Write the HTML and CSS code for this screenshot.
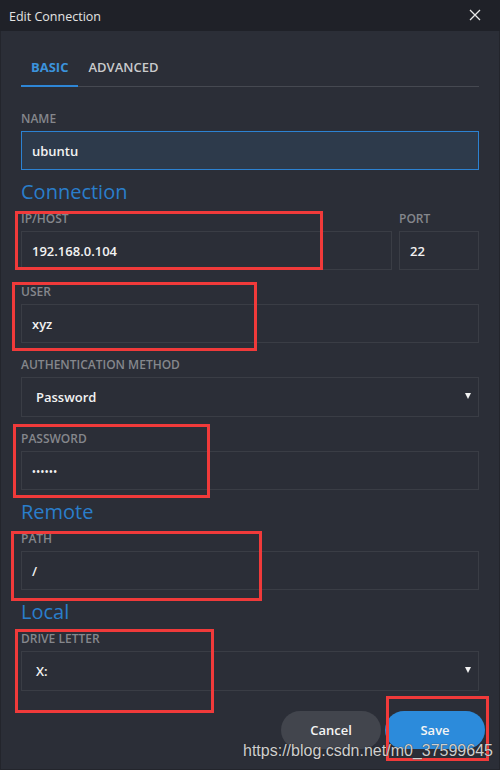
FILE: index.html
```html
<!DOCTYPE html>
<html>
<head>
<meta charset="utf-8">
<title>Edit Connection</title>
<link rel="stylesheet" href="styles.css">
</head>
<body>
<div class="window">
  <div class="titlebar">
    <span class="title">Edit Connection</span>
    <svg class="close" width="12" height="12" viewBox="0 0 12 12"><path d="M1 1L11 11M11 1L1 11" stroke="#e8e8e8" stroke-width="1.3" fill="none"/></svg>
  </div>
  <div class="content">
    <div class="tabs">
      <div class="tab active">BASIC</div>
      <div class="tab">ADVANCED</div>
    </div>

    <div class="field first">
      <div class="label">NAME</div>
      <div class="input focused">ubuntu</div>
    </div>

    <div class="heading h-connection">Connection</div>

    <div class="row after-heading">
      <div class="field grow">
        <div class="label">IP/HOST</div>
        <div class="input">192.168.0.104</div>
      </div>
      <div class="field port">
        <div class="label">PORT</div>
        <div class="input">22</div>
      </div>
    </div>

    <div class="field">
      <div class="label">USER</div>
      <div class="input">xyz</div>
    </div>

    <div class="field">
      <div class="label">AUTHENTICATION METHOD</div>
      <div class="select"><span>Password</span><span class="arrow"></span></div>
    </div>

    <div class="field">
      <div class="label">PASSWORD</div>
      <div class="input dots">&#8226;&#8226;&#8226;&#8226;&#8226;&#8226;</div>
    </div>

    <div class="heading h-section">Remote</div>

    <div class="field after-heading">
      <div class="label">PATH</div>
      <div class="input">/</div>
    </div>

    <div class="heading h-section">Local</div>

    <div class="field after-heading">
      <div class="label">DRIVE LETTER</div>
      <div class="select"><span>X:</span><span class="arrow"></span></div>
    </div>

    <div class="buttons">
      <div class="btn cancel">Cancel</div>
      <div class="btn save">Save</div>
    </div>
  </div>

  <div class="mark m-ip"></div>
  <div class="mark m-user"></div>
  <div class="mark m-pass"></div>
  <div class="mark m-path"></div>
  <div class="mark m-drive"></div>
  <div class="mark m-save"></div>
  <div class="watermark">https://blog.csdn.net/m0_37599645</div>
</div>
</body>
</html>
```
FILE: styles.css
```css
* { box-sizing: border-box; }
html, body { margin: 0; padding: 0; background: #2b2e37; }
body { font-family: "Open Sans", "Noto Sans", sans-serif; }

.window {
  position: relative;
  width: 500px;
  height: 770px;
  display: flex;
  flex-direction: column;
  overflow: hidden;
}

.titlebar {
  height: 31px;
  flex: none;
  background: #1f2128;
  display: flex;
  align-items: center;
  justify-content: space-between;
  padding: 0 19px 0 9px;
}
.title {
  color: #e4e4e4;
  font-size: 12.5px;
  line-height: 16px;
  margin-top: 2px;
}
.close { display: block; margin-top: -2px; }

.content {
  flex: 1;
  background: #2b2e37;
  border: 1px solid #23252c;
  border-top: none;
  padding: 17px 20px 0;
  display: flex;
  flex-direction: column;
}

.tabs {
  display: flex;
  border-bottom: 1px solid #464951;
}
.tab {
  font-size: 13px;
  line-height: 18px;
  font-weight: 600;
  color: #c9cacc;
  padding: 10px 10px 9px;
  border-bottom: 2px solid transparent;
  margin-bottom: -1px;
}
.tab.active {
  color: #3b93dc;
  font-weight: 700;
  border-bottom-color: #2e86d6;
}

.field { margin-top: 13px; display: flex; flex-direction: column; }
.field.first { margin-top: 23px; }
.after-heading { margin-top: 6px; }
.row { display: flex; gap: 7px; }
.row .field { margin-top: 0; }
.grow { flex: 1; }
.port { width: 80px; }

.label {
  font-size: 12px;
  line-height: 17px;
  font-weight: 600;
  color: #85878c;
  margin-bottom: 4px;
}

.input, .select {
  height: 39px;
  border: 1px solid #3a3d45;
  background: #2b2e37;
  color: #f2f2f2;
  font-size: 13px;
  font-weight: 600;
  display: flex;
  align-items: center;
  padding: 0 10px;
}
.input.focused {
  background: #2d3a4b;
  border-color: #2c82d2;
}
.input.dots { font-size: 10px; letter-spacing: 0.5px; padding-top: 1px; }
.select {
  height: 40px;
  padding: 0 7px 0 14px;
  justify-content: space-between;
}
.arrow {
  width: 0; height: 0;
  border-left: 3.5px solid transparent;
  border-right: 3.5px solid transparent;
  border-top: 6px solid #f2f2f2;
  margin-top: -2px;
}

.heading {
  font-size: 20px;
  line-height: 24px;
  color: #2a7ecb;
}
.h-connection { margin-top: 10px; }
.h-section { margin-top: 10px; }

.buttons {
  display: flex;
  justify-content: flex-end;
  gap: 4px;
  margin-top: 20px;
  margin-right: -6px;
}
.btn {
  width: 100px;
  height: 38px;
  border-radius: 19px;
  display: flex;
  align-items: center;
  justify-content: center;
  color: #f4f4f4;
  font-size: 13px;
  font-weight: 600;
}
.cancel { background: #42454d; }
.save { background: #2c8bdb; }

.mark {
  position: absolute;
  border: 3px solid #f03a3a;
}
.m-ip { left: 15px; top: 211px; width: 308px; height: 59px; }
.m-user { left: 12px; top: 282px; width: 245px; height: 69px; }
.m-pass { left: 13px; top: 424px; width: 197px; height: 74px; }
.m-path { left: 11px; top: 531px; width: 251px; height: 70px; }
.m-drive { left: 15px; top: 629px; width: 199px; height: 84px; }
.m-save { left: 386px; top: 696px; width: 103px; height: 65px; }

.watermark {
  position: absolute;
  left: 243px;
  top: 740px;
  font-family: "Liberation Sans", Arial, sans-serif;
  font-size: 16px;
  line-height: 22px;
  color: #cfcfcf;
  text-shadow: 0 0 1px #1c1c1c;
  white-space: nowrap;
}
```
